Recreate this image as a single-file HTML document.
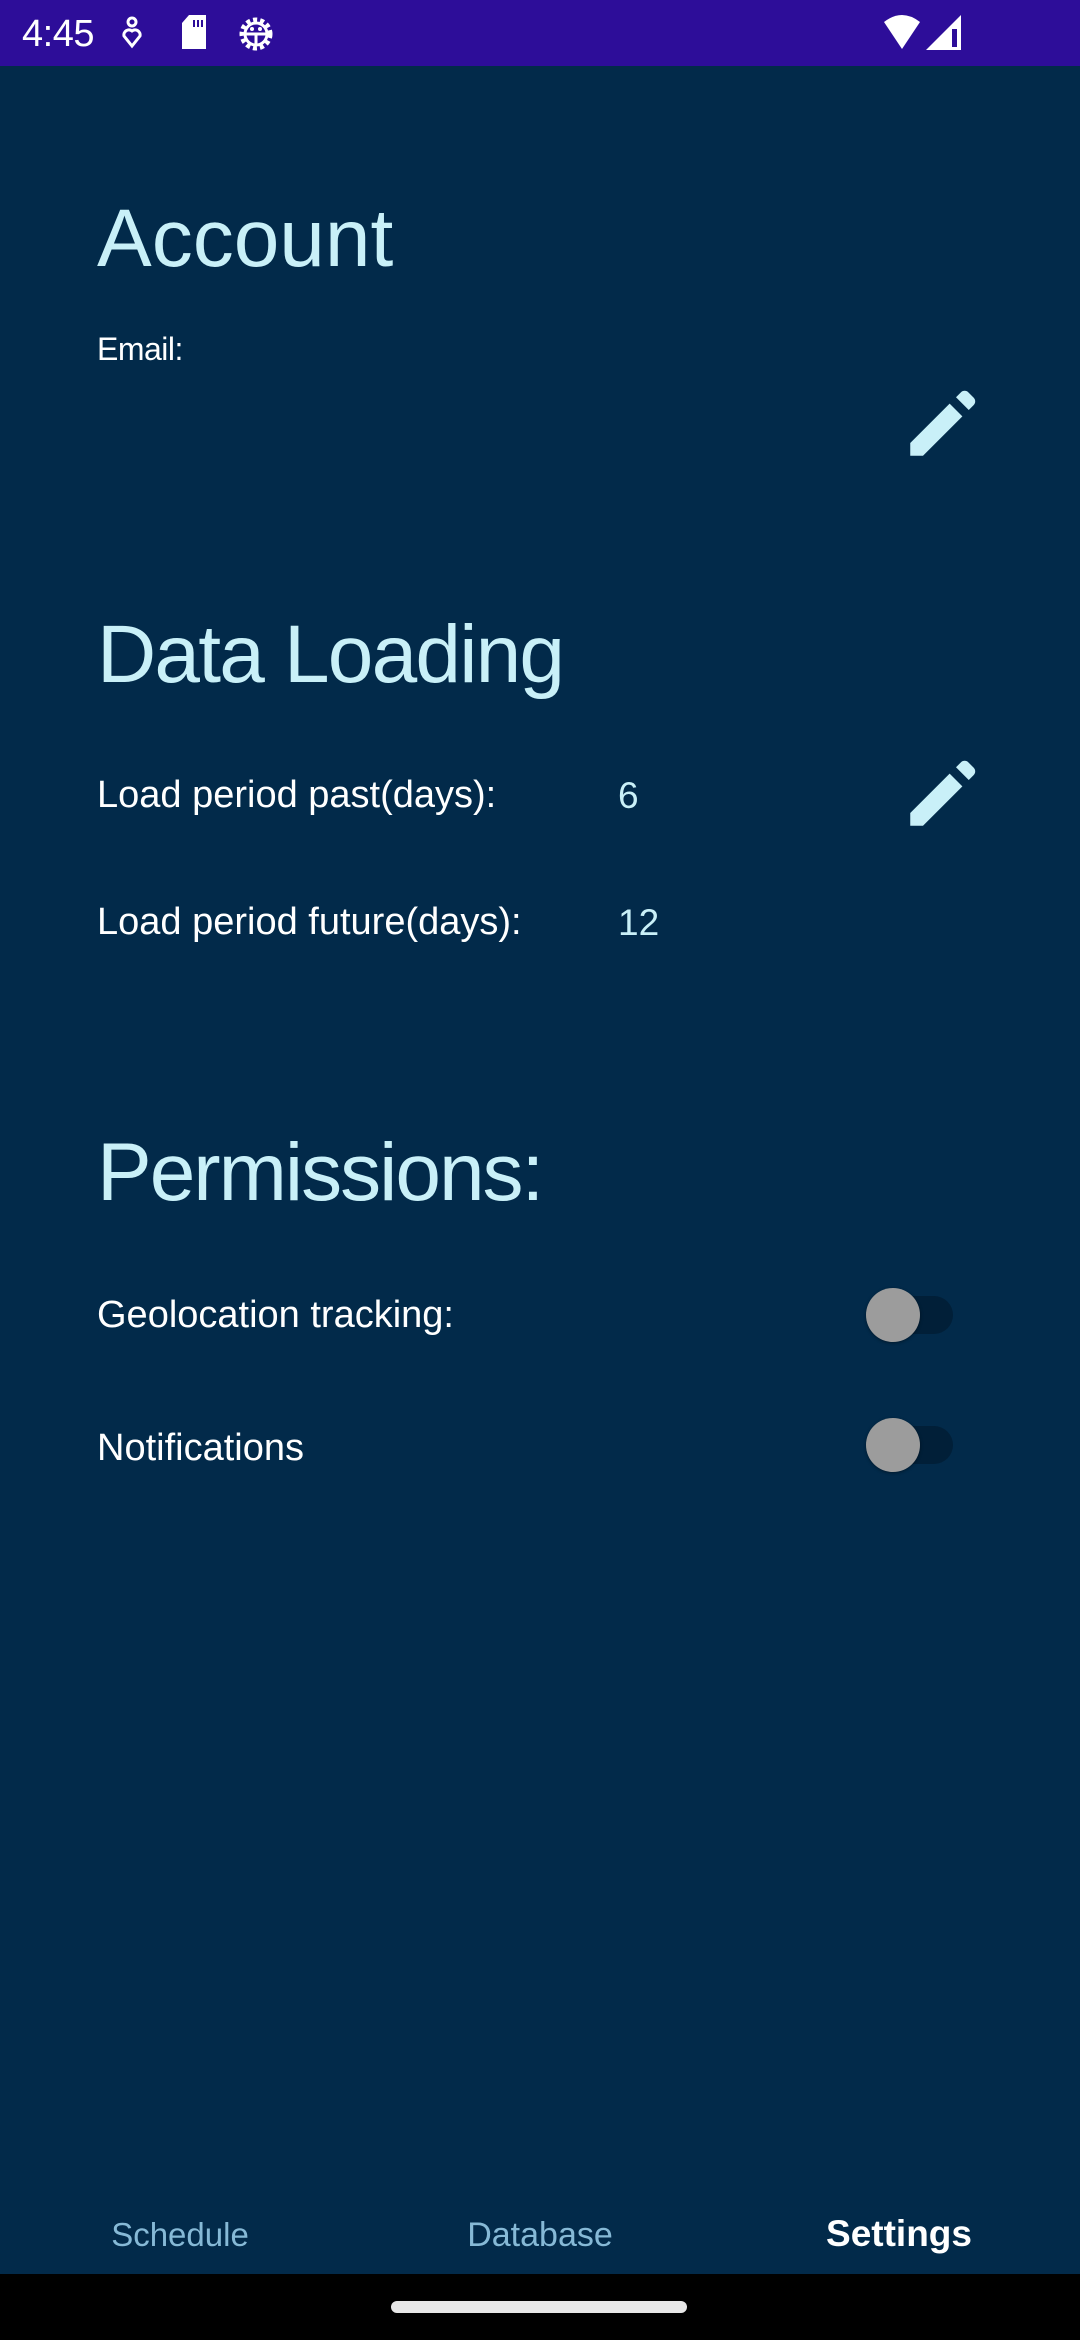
<!DOCTYPE html>
<html><head><meta charset="utf-8"><style>
*{margin:0;padding:0;box-sizing:border-box}
body{width:1080px;height:2340px;background:#022a4a;position:relative;overflow:hidden;font-family:"Liberation Sans",sans-serif}
.a{position:absolute;white-space:nowrap;line-height:1}
.h{font-size:82px;color:#c9f0f8;left:97px}
.r{font-size:38px;color:#fff;left:97px}
.v{font-size:37px;color:#c9f0f8;left:618px}
.n{font-size:33px;top:2218px;width:300px;text-align:center}
.tr{position:absolute;left:893px;width:60px;height:38px;border-radius:19px;background:#011f38}
.th{position:absolute;width:54px;height:54px;border-radius:50%;background:#9c9c9c;box-shadow:0 1px 3px rgba(0,0,0,.4)}
</style></head><body>
<div style="position:absolute;left:0;top:0;width:1080px;height:66px;background:#2d0d99"></div>
<div class="a" style="left:22px;top:15px;font-size:38px;color:#fff;letter-spacing:-0.5px">4:45</div>
<svg style="position:absolute;left:120px;top:16px" width="24" height="34" viewBox="0 0 24 34"><circle cx="12" cy="6" r="4" fill="none" stroke="#fff" stroke-width="3"/><path d="M12 30 L4 20 A5 5 0 0 1 12 15 A5 5 0 0 1 20 20 Z" fill="none" stroke="#fff" stroke-width="3"/></svg>
<svg style="position:absolute;left:180px;top:15px" width="28" height="36" viewBox="0 0 28 36"><path d="M9 0 H26 V34 H2 V8 Z" fill="#fff"/><rect x="13" y="5" width="2" height="7" fill="#2d0d99"/><rect x="17" y="5" width="2" height="7" fill="#2d0d99"/><rect x="21" y="5" width="2" height="7" fill="#2d0d99"/></svg>
<svg style="position:absolute;left:236px;top:14px" width="40" height="40" viewBox="0 0 40 40"><circle cx="20" cy="20" r="14" fill="none" stroke="#fff" stroke-width="5" stroke-dasharray="4 3"/><circle cx="20" cy="20" r="11" fill="none" stroke="#fff" stroke-width="3"/><path d="M9 20 H31 M20 20 V31" stroke="#fff" stroke-width="3"/><circle cx="16" cy="15" r="2" fill="#fff"/><circle cx="24" cy="15" r="2" fill="#fff"/></svg>
<svg style="position:absolute;left:882px;top:14px" width="44" height="36" viewBox="0 0 44 36"><path d="M20 35 L2 8 Q20 -6 38 8 Z" fill="#fff"/></svg>
<svg style="position:absolute;left:926px;top:15px" width="38" height="36" viewBox="0 0 38 36"><path d="M35 0 V35 H0 Z" fill="#fff"/><rect x="26" y="14" width="5" height="18" fill="#2d0d99"/></svg>

<div class="a h" style="top:198px">Account</div>
<div class="a" style="left:97px;top:333px;font-size:32px;color:#fff;letter-spacing:-0.5px">Email:</div>
<svg style="position:absolute;left:899px;top:377px" width="90" height="90" viewBox="0 0 24 24"><path fill="#c9f0f8" d="M3 17.6V21h3.4L16.9 10.5l-3.4-3.4L3 17.6z"/><path fill="#c9f0f8" d="M15.2 5.4l1.3-1.3a1.4 1.4 0 0 1 2 0l1.4 1.4a1.4 1.4 0 0 1 0 2l-1.3 1.3z"/></svg>

<div class="a h" style="top:614px;letter-spacing:-1.8px">Data Loading</div>
<div class="a r" style="top:776px">Load period past(days):</div>
<div class="a v" style="top:777px">6</div>
<svg style="position:absolute;left:899px;top:747px" width="90" height="90" viewBox="0 0 24 24"><path fill="#c9f0f8" d="M3 17.6V21h3.4L16.9 10.5l-3.4-3.4L3 17.6z"/><path fill="#c9f0f8" d="M15.2 5.4l1.3-1.3a1.4 1.4 0 0 1 2 0l1.4 1.4a1.4 1.4 0 0 1 0 2l-1.3 1.3z"/></svg>
<div class="a r" style="top:903px">Load period future(days):</div>
<div class="a v" style="top:904px">12</div>

<div class="a h" style="top:1132px;letter-spacing:-2px">Permissions:</div>
<div class="a r" style="top:1296px">Geolocation tracking:</div>
<div class="tr" style="top:1296px"></div><div class="th" style="left:866px;top:1288px"></div>
<div class="a r" style="top:1429px">Notifications</div>
<div class="tr" style="top:1426px"></div><div class="th" style="left:866px;top:1418px"></div>

<div class="a n" style="left:30px;color:#86b9d6;font-size:33px">Schedule</div>
<div class="a n" style="left:390px;color:#86b9d6;font-size:34px">Database</div>
<div class="a n" style="left:749px;color:#fff;font-weight:bold;font-size:37px;top:2215px">Settings</div>
<div style="position:absolute;left:0;top:2274px;width:1080px;height:66px;background:#000"></div>
<div style="position:absolute;left:391px;top:2301px;width:296px;height:12px;border-radius:6px;background:#e8e8e8"></div>
</body></html>
